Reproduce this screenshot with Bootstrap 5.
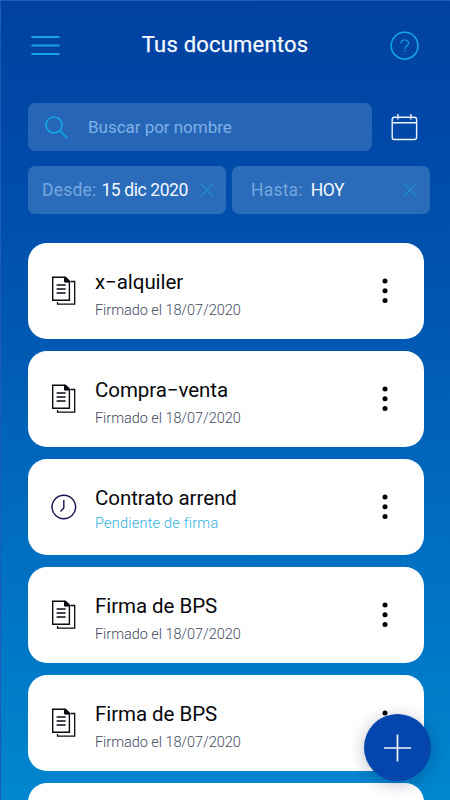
<!DOCTYPE html>
<html lang="es">
<head>
<meta charset="utf-8">
<meta name="viewport" content="width=device-width, initial-scale=1">
<title>Tus documentos</title>
<link href="https://cdn.jsdelivr.net/npm/bootstrap@5.3.0/dist/css/bootstrap.min.css" rel="stylesheet">
<style>
body{font-family:Roboto,"Open Sans",sans-serif;background:#0041a1}
.screen{width:450px;height:800px;background:linear-gradient(#0041a0 0%,#0049a9 18%,#0057b2 40%,#0070c2 70%,#0086cf 100%);border-top:1px solid #1c5cb4;border-left:1px solid #1c5cb4;padding-left:27px}
.topbar{height:88px;padding:0 31px 0 3px}
.title{font-size:22px;font-weight:400;line-height:26px;color:#f4f9ff;letter-spacing:.2px;margin-left:1px;-webkit-text-stroke:.25px #f4f9ff}
.search{width:344px;height:48px;border-radius:7px;background:#2766b6;margin-top:14px;padding-left:17px}
.search span{font-size:17px;color:#7fb0e8;letter-spacing:-.03px;margin-left:20px;font-weight:400;padding-top:1px}
.calendar{margin:25px 0 0 19px}
.filters{gap:6px;margin-top:15px}
.filter{height:48px;border-radius:7px;background:#2a6bba;font-size:17.5px;font-weight:300;white-space:nowrap}
.filter b{font-weight:400;color:#f2f8ff}
.filter i{font-style:normal;font-weight:400;color:#76a7df;letter-spacing:.2px}
.from{width:198px;padding:0 12px 0 14px}
.from b{letter-spacing:-.4px;margin-left:5px}
.until{width:198px;padding:0 13px 0 19px}
.until b{letter-spacing:-.5px;margin-left:8px}
.docs{gap:12px;margin-top:28.5px}
.doc{width:396px;height:96px;border-radius:19px;border:0;padding:0 36px 0 23px}
.name{font-size:20.5px;line-height:24px;color:#08080c;letter-spacing:-.06px}
.state{font-size:14.5px;line-height:18px;font-weight:300;color:#3e4a62;margin-top:8px;letter-spacing:-.05px}
.texts{margin-left:18px;padding-top:9px}
.pending .state{color:#2fb1e2;margin-top:5px;letter-spacing:.22px}
.pending .texts{padding-top:6px}
.fab{left:364px;top:714px;width:67px;height:67px;background:#0546ae;box-shadow:0 3px 16px rgba(0,20,60,.28)}
</style>
</head>
<body class="overflow-hidden">
<svg class="d-none">
<symbol id="files" viewBox="0 0 26 30"><path d="M6.500 26v2.200H23.700V5.500h-4" fill="none" stroke="#0a0a12" stroke-width="1.3"/><path d="M1.700 1.200h12.400l4.300 4.300v18.700H1.700z" fill="#fff" stroke="#0a0a12" stroke-width="1.4"/><path d="M13.500 1.200h1.300l4.200 4.200v.7h-5.500z" fill="#0a0a12" stroke="#0a0a12"/><path d="M5.600 9h9M5.600 13h9M5.600 17h9" stroke="#0a0a12" stroke-width="1.600"/></symbol>
<symbol id="dots" viewBox="0 0 6 26"><circle cx="3" cy="3" r="2.500"/><circle cx="3" cy="12.700" r="2.500"/><circle cx="3" cy="22.400" r="2.500"/></symbol>
<symbol id="cross" viewBox="0 0 14 14"><path d="M.7.7l12.600 12.600M13.300.7L.7 13.300" stroke="#2191d2" stroke-width="1.1"/></symbol>
</svg>
<main class="screen position-relative overflow-hidden">
<header class="topbar d-flex align-items-center justify-content-between">
<svg width="29" height="20" stroke="#16a5e4" stroke-width="2"><path d="M.5 2h28M.5 10.500h28M.5 19h28"/></svg>
<h1 class="title mb-0">Tus documentos</h1>
<svg width="30" height="30" fill="none" stroke="#13a4e5"><circle cx="15.600" cy="15.700" r="13.400" stroke-width="1.6"/><path d="M12 13.500c0-2.200 1.500-3.500 3.700-3.500s3.800 1.300 3.800 3.300c0 2.800-3.600 2.700-3.600 5.200v.5M15.900 20.200v1.500" stroke-width="1.2"/></svg>
</header>
<div class="d-flex">
<div class="search d-flex align-items-center"><svg width="23" height="23" fill="none" stroke="#12a6df" stroke-width="1.7"><circle cx="9" cy="9" r="8"/><path d="M14.700 14.700l7.600 7.400"/></svg><span>Buscar por nombre</span></div>
<svg class="calendar" width="28" height="28" fill="none" stroke="#edf4ff" stroke-width="1.4"><rect x="1.200" y="3.200" width="24.400" height="22.300" rx="2.200"/><path d="M1.200 8.800h24.400M6.900 0v5.500M19.900 0v5.500"/></svg>
</div>
<div class="filters d-flex">
<div class="filter from d-flex align-items-center"><i>Desde:</i><b>15 dic 2020</b><svg class="ms-auto" width="14" height="14"><use href="#cross"/></svg></div>
<div class="filter until d-flex align-items-center"><i>Hasta:</i><b>HOY</b><svg class="ms-auto" width="14" height="14"><use href="#cross"/></svg></div>
</div>
<section class="docs d-flex flex-column">
<article class="card doc flex-row align-items-center flex-shrink-0"><svg width="26" height="30"><use href="#files"/></svg><div class="texts"><div class="name">x−alquiler</div><div class="state">Firmado el 18/07/2020</div></div><svg class="ms-auto" width="6" height="26"><use href="#dots"/></svg></article>
<article class="card doc flex-row align-items-center flex-shrink-0"><svg width="26" height="30"><use href="#files"/></svg><div class="texts"><div class="name">Compra−venta</div><div class="state">Firmado el 18/07/2020</div></div><svg class="ms-auto" width="6" height="26"><use href="#dots"/></svg></article>
<article class="card doc pending flex-row align-items-center flex-shrink-0"><svg width="26" height="26" fill="none" stroke="#15104c" stroke-width="1.4"><circle cx="12.800" cy="13" r="11.800"/><path d="M12.800 6v8l-3.300 3.400"/></svg><div class="texts"><div class="name">Contrato arrend</div><div class="state">Pendiente de firma</div></div><svg class="ms-auto" width="6" height="26"><use href="#dots"/></svg></article>
<article class="card doc flex-row align-items-center flex-shrink-0"><svg width="26" height="30"><use href="#files"/></svg><div class="texts"><div class="name">Firma de BPS</div><div class="state">Firmado el 18/07/2020</div></div><svg class="ms-auto" width="6" height="26"><use href="#dots"/></svg></article>
<article class="card doc flex-row align-items-center flex-shrink-0"><svg width="26" height="30"><use href="#files"/></svg><div class="texts"><div class="name">Firma de BPS</div><div class="state">Firmado el 18/07/2020</div></div><svg class="ms-auto" width="6" height="26"><use href="#dots"/></svg></article>
<article class="card doc flex-shrink-0"></article>
</section>
</main>
<button class="fab btn p-0 border-0 rounded-circle position-fixed d-flex align-items-center justify-content-center" aria-label="Añadir"><svg width="28" height="28" stroke="#f2f6ff" stroke-width="1.700"><path d="M13.500 .5v27M0 14h27"/></svg></button>
</body>
</html>
